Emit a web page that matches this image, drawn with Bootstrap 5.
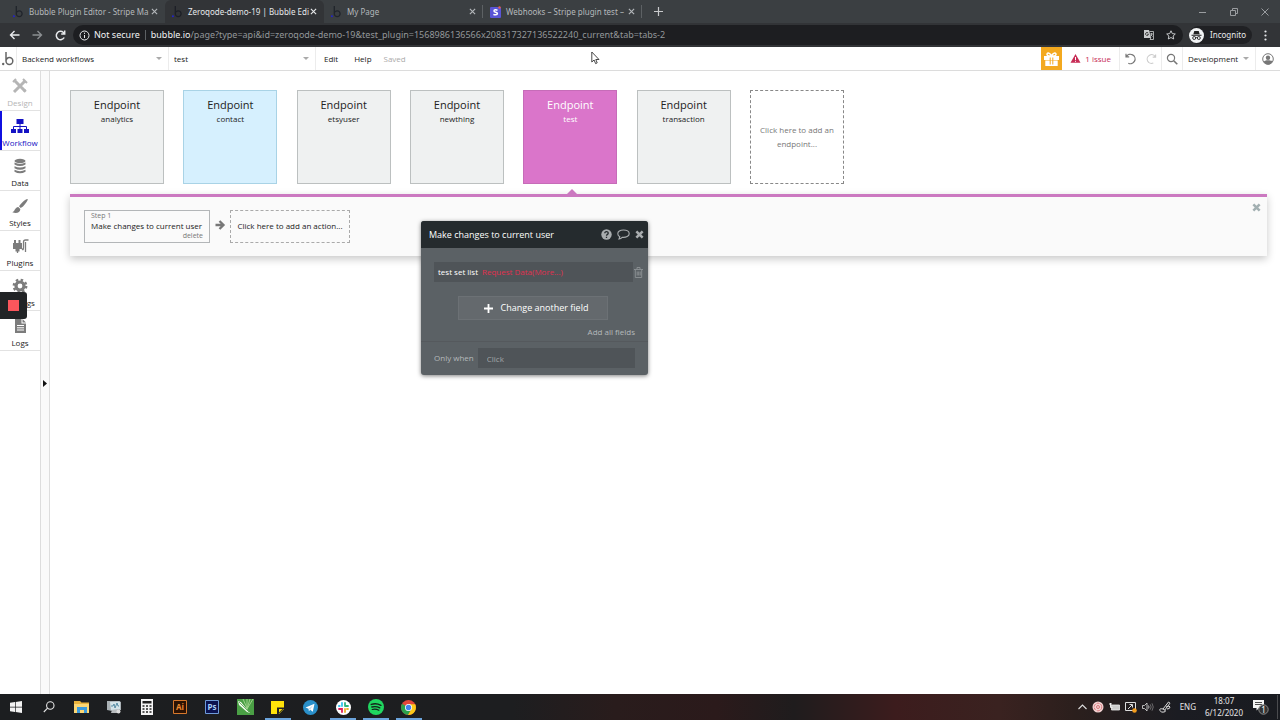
<!DOCTYPE html>
<html lang="en">
<head>
<meta charset="utf-8">
<meta name="viewport" content="width=device-width, initial-scale=1">
<title>Zeroqode-demo-19 | Bubble Editor</title>
<link rel="stylesheet" href="https://cdn.jsdelivr.net/npm/bootstrap@5.3.0/dist/css/bootstrap.min.css">
<style>
body{font-family:"Open Sans",sans-serif;font-size:8px;line-height:12px;color:#222;background:#fff}
button,select,input{font:inherit;color:inherit}
button{background:none;border:0;padding:0}
a{color:inherit;text-decoration:none}
svg{display:block;flex:none}
.chrome-font{font-family:"Noto Sans","Open Sans",sans-serif}

/* browser window */
.tabstrip{height:23px;background:#3b3f42;padding-left:6px}
.btab{width:159px;padding:0 7px 0 6px;color:#b4b8bb}
.btab.active{background:#323437;border-radius:6px 6px 0 0;color:#e6e8ea}
.btab .ttl{margin-left:5px;white-space:nowrap}
.btab button{margin-left:auto}
.btab.split{background:linear-gradient(#5d6164,#5d6164) no-repeat right center/1px 13px}
.winctl{gap:23px;padding-right:11px;color:#9a9da0}
.toolbar{height:24px;background:#323437;color:#e8eaed;padding:0 9px}
.omnibox{height:20px;border-radius:10px;background:#1d1e21;color:#93979a;font-size:9px;padding:0 7px 0 6px;margin-left:7px;white-space:nowrap}
.omnibox b{font-weight:400;color:#f1f3f4}
.omnibox .bar{width:1px;height:10px;background:#5d6164;margin:0 5px}
.incog{height:18px;border-radius:9px;background:#202124;padding-right:6px;gap:6px;margin-left:6px}

/* editor top bar */
.appbar{height:24px;border-bottom:1px solid #dcdcdc;background:#fff;white-space:nowrap}
.appbar>*{height:23px}
.cell{border-right:1px solid #ececec}
.logo{padding:0 2px}
.picker{appearance:none;border:0;border-right:1px solid #ececec;outline:0;padding:0 0 0 5px;background:#fff url("data:image/svg+xml,%3Csvg xmlns='http://www.w3.org/2000/svg' viewBox='0 0 6 4'%3E%3Cpath d='M0 0h6L3 3z' fill='%23aaa'/%3E%3C/svg%3E") no-repeat right 6px center/6px 4px}
.picker.page{width:152px}
.picker.flow{width:147px}
.picker.version{width:73px}
.help{margin-left:16px}
.saved{margin-left:12px;color:#aaa}
.gift{width:21px;background:#f3a91f}
.issue{color:#c72c56}
.account{padding:0 6px}

/* left rail */
.rail{width:41px;border-right:1px solid #ddd}
.rail a{height:40px;border-bottom:1px solid #e2e2e2;padding-top:7px;gap:3px}
.rail svg{color:#7c7c7c}
.rail a.off,.rail a.off svg{color:#b5b5b5}
.rail a.on,.rail a.on svg{color:#1412c4}
.rail a.on{box-shadow:inset 2px 0 #1010e0}
.gutter{width:9px;background:#fafafa;border-right:1px solid #ddd;padding:309px 0 0 2px}
.recorder{left:0;top:292px;width:27px;height:27px;background:#222426;border-radius:0 3px 3px 0;padding-left:8px}
.recorder i{width:11px;height:11px;background:#fb565c}

/* workflow canvas */
.canvas{padding:19px 13px 0 20px}
.endpoints{max-width:774px}
.endpoint{width:94px;height:94px;border:1px solid #bcc0c0;background:#eff1f1;padding-top:6px}
.endpoint strong{font-weight:400;font-size:11px;line-height:16px}
.endpoint.blue{background:#d6f0fe;border-color:#a9d3e6}
.endpoint.pink{background:#da75ca;border-color:#c66cb8;color:#fff}
.endpoint.new{background:#fff;border:1px dashed #888;color:#777;padding:0 6px;line-height:14px}
.actions{margin-top:10px;border-top:3px solid #cb78c0;background:#fafafa;height:62px;padding:13px 14px;box-shadow:0 3px 8px rgba(0,0,0,.22)}
.notch{left:497px;top:-8px;color:#cb78c0}
.step{width:126px;height:33px;border:1px solid #b3b6b8;padding:0 6px;line-height:10px}
.step small{font-size:7px;color:#777}
.addstep{width:120px;height:33px;border:1px dashed #aaa;padding-bottom:2px}
.shut{right:6px;top:6px;color:#a3b0b2}

/* property editor */
.editor{left:421px;top:221px;width:227px;background:#5b6165;border-radius:3px;box-shadow:0 1px 4px rgba(0,0,0,.5);color:#fff}
.editor header{height:27px;background:#252b2e;border-radius:3px 3px 0 0;padding:0 4px 0 8px;font-size:9px;gap:5px}
.editor header button{color:#a9adaf}
.field{padding:14px 5px 14px 13px}
.expr{width:199px;height:20px;background:#4f5458;padding-left:4px;gap:4px}
.expr em{font-style:normal;color:#e0304f}
.editor .more{width:150px;height:24px;background:#64696d;border:1px solid #6c7175;margin-left:37px;font-size:9px;padding-left:6px}
.editor .muted{color:#b5b9bb}
.allfields{padding:6px 13px 3px}
.when{border-top:1px solid #55595d;padding:6px 13px 7px}
.when input{height:20px;min-width:0;background:#4f5458;border:0;padding:0 9px;border-radius:0}
.when input::placeholder{color:#a3a7aa;opacity:1}
.pointer{left:591px;top:51px}

/* desktop taskbar */
.taskbar{height:26px;color:#e6e6e6;background:linear-gradient(90deg,#1c1e20 0,#1d1e20 40%,#291c1c 48%,#2b1a1b 56%,#1f1c1d 62%,#3c1c1d 70%,#3a2220 78%,#2b1f1d 84%,#1b1c22 92%,#191b20 100%)}
.apps{width:425px}
.apps button{height:26px;flex:1 1 0;display:flex;align-items:center;justify-content:center}
.apps button.run{background:linear-gradient(#6ba4dc,#6ba4dc) no-repeat center bottom/26px 2px}
.tray{gap:5px;line-height:12px}
.sliver{width:1px;background:#4a4b4e;margin:0 2px 0 3px}
</style>
</head>
<body class="d-flex flex-column min-vh-100 position-relative overflow-hidden">
<svg class="d-none">
  <symbol id="bub" viewBox="0 0 12 14"><path d="M4 0v9a3.400 3.400 0 1 0 3.400-3.400A3.400 3.400 0 0 0 4 9" fill="none" stroke="currentColor" stroke-width="1.500"/><circle cx="1.200" cy="12" r="1.200" fill="var(--dot,currentColor)"/></symbol>
  <symbol id="cross" viewBox="0 0 8 8"><path d="M1 1l6 6M7 1L1 7" stroke="currentColor" stroke-width="1.300"/></symbol>
  <symbol id="fatx" viewBox="0 0 10 10"><path d="M1.500 1.500l7 7M8.500 1.500l-7 7" stroke="currentColor" stroke-width="2.800"/></symbol>
</svg>

<div class="chrome-font">
  <div class="tabstrip d-flex">
    <div class="btab d-flex align-items-center"><svg width="12" height="12" style="--dot:#2222cc" color="#20242b"><use href="#bub"/></svg><span class="ttl">Bubble Plugin Editor - Stripe Ma</span><button aria-label="Close tab"><svg width="7" height="7"><use href="#cross"/></svg></button></div>
    <div class="btab active d-flex align-items-center"><svg width="12" height="12" style="--dot:#2222cc" color="#1c1f26"><use href="#bub"/></svg><span class="ttl">Zeroqode-demo-19 | Bubble Edi</span><button aria-label="Close tab"><svg width="7" height="7"><use href="#cross"/></svg></button></div>
    <div class="btab split d-flex align-items-center"><svg width="12" height="12" style="--dot:#2222cc" color="#20242b"><use href="#bub"/></svg><span class="ttl">My Page</span><button aria-label="Close tab"><svg width="7" height="7"><use href="#cross"/></svg></button></div>
    <div class="btab split d-flex align-items-center"><svg width="12" height="12" viewBox="0 0 12 12"><rect x="1" y="1" width="11" height="11" rx="1" fill="#5a55d6"/><path d="M8.500 4.300C7.500 3.700 5 3.400 5 5s3.400.9 3.400 2.500S5.500 9 4.400 8.400" fill="none" stroke="#fff" stroke-width="1.500"/><circle cx="10.500" cy="1.500" r="1.200" fill="#e5604d"/></svg><span class="ttl">Webhooks – Stripe plugin test –</span><button aria-label="Close tab"><svg width="7" height="7"><use href="#cross"/></svg></button></div>
    <button class="px-2 ms-1" aria-label="New tab"><svg width="9" height="9" viewBox="0 0 9 9" stroke="#c8cacc" stroke-width="1.200"><path d="M4.500 0v9M0 4.500h9"/></svg></button>
    <div class="winctl d-flex ms-auto align-items-center">
      <button aria-label="Minimize"><svg width="8" height="8" viewBox="0 0 8 8" stroke="currentColor"><path d="M0 4.500h7"/></svg></button>
      <button aria-label="Restore"><svg width="8" height="8" viewBox="0 0 8 8" fill="none" stroke="currentColor"><path d="M.5 2.500h5v5h-5zM2.500 2V.5h5v5H6"/></svg></button>
      <button aria-label="Close window"><svg width="8" height="8" viewBox="0 0 8 8" stroke="currentColor"><path d="M.5.5l7 7M7.500.5l-7 7"/></svg></button>
    </div>
  </div>
  <div class="toolbar d-flex align-items-center">
    <button aria-label="Back"><svg width="11" height="10" viewBox="0 0 11 10" fill="none" stroke="currentColor" stroke-width="1.400"><path d="M10.500 5H1.500M5.500 1l-4 4 4 4"/></svg></button>
    <button class="ms-2 ps-1" aria-label="Forward"><svg width="11" height="10" viewBox="0 0 11 10" fill="none" stroke="#8b8e91" stroke-width="1.400"><path d="M.5 5h9M5.500 1l4 4-4 4"/></svg></button>
    <button class="ms-2 ps-1" aria-label="Reload"><svg width="11" height="11" viewBox="0 0 11 11" fill="none" stroke="currentColor" stroke-width="1.500"><path d="M9.200 7.500A4.200 4.200 0 1 1 8.400 2.500L9.500 3.700M9.700.5v3.600H6.200"/></svg></button>
    <div class="omnibox d-flex align-items-center flex-fill">
      <svg width="11" height="11" viewBox="0 0 11 11" fill="none" stroke="#e8eaed"><circle cx="5.500" cy="5.500" r="4.500"/><path d="M5.500 5v3M5.500 2.700v1.200"/></svg>
      <b class="ms-1">Not secure</b><span class="bar"></span><span><b>bubble.io</b>/page?type=api&amp;id=zeroqode-demo-19&amp;test_plugin=1568986136566x208317327136522240_current&amp;tab=tabs-2</span>
      <button class="ms-auto me-2 pe-1" aria-label="Translate"><svg width="10" height="10" viewBox="0 0 10 10"><path d="M0 0h5l2 8H0z" fill="#c9cbcd"/><path d="M5.500 1.500h4v8H6l1-2M6 4h3M7.500 3v1c0 1-.5 2-1.500 2.500M7 5l1.500 1.500" fill="none" stroke="#c9cbcd" stroke-width=".8"/><path d="M4.200 3A1.500 1.500 0 1 0 4.500 4.300H3.200" fill="none" stroke="#222" stroke-width=".8"/></svg></button>
      <button aria-label="Bookmark"><svg width="10" height="10" viewBox="0 0 10 10" fill="none" stroke="#d5d7d9" stroke-width=".9"><path d="M5 .8l1.300 2.800 3 .4-2.200 2 .6 3L5 7.500 2.300 9l.6-3L.7 4l3-.4z"/></svg></button>
    </div>
    <div class="incog d-flex align-items-center"><svg width="15" height="15" viewBox="0 0 15 15"><circle cx="7.500" cy="7.500" r="7.500" fill="#f1f3f4"/><path d="M2.500 6.800h10v.9h-10zM4.300 6.300L5.300 3h4.400l1 3.300z" fill="#222"/><g fill="none" stroke="#222" stroke-width=".9"><circle cx="5.200" cy="10" r="1.500"/><circle cx="9.800" cy="10" r="1.500"/><path d="M6.700 9.800q.8-.5 1.600 0"/></g></svg>Incognito</div>
    <button class="ms-2 ps-1" aria-label="Menu"><svg width="3" height="11" viewBox="0 0 3 11" fill="currentColor"><circle cx="1.500" cy="1.500" r="1.100"/><circle cx="1.500" cy="5.500" r="1.100"/><circle cx="1.500" cy="9.500" r="1.100"/></svg></button>
    <span class="ps-1"></span>
  </div>
</div>

<nav class="appbar d-flex align-items-center">
  <a href="#" class="cell logo d-flex align-items-center" aria-label="Bubble"><svg width="12" height="14" color="#666"><use href="#bub"/></svg></a>
  <select class="picker page" aria-label="Page"><option>Backend workflows</option></select>
  <select class="picker flow" aria-label="Workflow"><option>test</option></select>
  <a href="#" class="d-flex align-items-center ps-2">Edit</a>
  <a href="#" class="help d-flex align-items-center">Help</a>
  <span class="saved d-flex align-items-center">Saved</span>
  <button class="gift d-flex align-items-center justify-content-center ms-auto" aria-label="Gift"><svg width="15" height="14" viewBox="0 0 15 14"><path d="M0 4h15v4H0zM1.300 8.500h12.400V14H1.300z" fill="#fff"/><path d="M7.500 4C6.500 1 3 0 3 2.400 3 4 5.500 4 7.500 4zM7.500 4c1-3 4.500-4 4.500-1.600C12 4 9.500 4 7.500 4z" fill="none" stroke="#fff" stroke-width="1.500"/><path d="M6.200 5.500v7M8.800 5.500v7" stroke="#f3a91f"/></svg></button>
  <a href="#" class="cell issue d-flex align-items-center px-2 gap-1"><svg width="11" height="9" viewBox="0 0 11 9"><path d="M5.500 0L10.500 8.800H.5z" fill="currentColor"/><path d="M5.500 3v3M5.500 6.800v1" stroke="#fff"/></svg><span>1 issue</span></a>
  <button class="px-1" aria-label="Undo"><svg width="13" height="12" viewBox="0 0 13 12" fill="none" stroke="#777" stroke-width="1.200"><path d="M2 .8v3h3.200M2.300 3.600A4.700 4.700 0 1 1 4.300 10.200"/></svg></button>
  <button class="cell px-1" aria-label="Redo"><svg width="12" height="12" viewBox="0 0 13 12" fill="none" stroke="#ccc" stroke-width="1.200"><path d="M11.500 1v3H8.300M11.200 3.800A4.700 4.700 0 1 0 9 10.300"/></svg></button>
  <button class="cell px-1" aria-label="Search"><svg width="12" height="12" viewBox="0 0 12 12" fill="none" stroke="#777" stroke-width="1.200"><circle cx="5" cy="5" r="3.600"/><path d="M7.700 7.700l3.600 3.600" stroke-width="1.600"/></svg></button>
  <select class="picker version" aria-label="Version"><option>Development</option></select>
  <button class="account" aria-label="Account"><svg width="12" height="12" viewBox="0 0 12 12"><circle cx="6" cy="6" r="5.300" fill="none" stroke="#777"/><circle cx="6" cy="4.700" r="2.200" fill="#777"/><path d="M1.500 9c1-2.500 8-2.500 9 0-2 3.300-7 3.300-9 0z" fill="#777"/></svg></button>
</nav>

<main class="d-flex flex-fill position-relative">
  <nav class="rail flex-shrink-0">
    <a href="#" class="off d-flex flex-column align-items-center"><svg width="16" height="16" viewBox="0 0 16 16"><path d="M2 14L13 3M3 3l10 10" stroke="currentColor" stroke-width="3"/><path d="M1 4l3-3M12 14l2-2M11 1l4 4" stroke="currentColor" stroke-width="2"/></svg>Design</a>
    <a href="#" class="on d-flex flex-column align-items-center"><svg width="18" height="16" viewBox="0 0 18 16"><path d="M5.500 1h7v5h-7zM0 11h5v4H0zM6.500 11h5v4h-5zM13 11h5v4h-5z" fill="currentColor"/><path d="M9 6v5M2.500 11V8.500h13V11" fill="none" stroke="currentColor"/></svg>Workflow</a>
    <a href="#" class="d-flex flex-column align-items-center"><svg width="12" height="16" viewBox="0 0 12 16" fill="currentColor"><ellipse cx="6" cy="3" rx="5.500" ry="2.200"/><path d="M.5 4.600q5.500 2.800 11 0v2q-5.500 3-11 0zM.5 8.200q5.500 2.800 11 0v2q-5.500 3-11 0zM.5 11.800q5.500 2.800 11 0v2q-5.500 3-11 0z"/></svg>Data</a>
    <a href="#" class="d-flex flex-column align-items-center"><svg width="16" height="16" viewBox="0 0 16 16" fill="currentColor"><path d="M15.500 1c.8.800-.5 3-4.500 7.500L8.700 10 7 8.300C9 5 14.500.2 15.500 1zM6.300 9l2 2c.2 3.500-4 5-8 3.200C3 13.500 2.500 9.500 6.300 9z"/></svg>Styles</a>
    <a href="#" class="d-flex flex-column align-items-center"><svg width="17" height="16" viewBox="0 0 17 16"><path d="M1 5h9v6H7.500v2.500h-4V11H1zM2 2h2v3H2zM6.500 2h2v3h-2z" fill="currentColor"/><path d="M5.500 13v2M10 10.500q1.500 3 1.500-1.500V4q0-2 2-2h3M13.500 14V4" fill="none" stroke="currentColor" stroke-width="1.300"/></svg>Plugins</a>
    <a href="#" class="d-flex flex-column align-items-center"><svg width="16" height="16" viewBox="0 0 16 16" fill="none" stroke="currentColor"><circle cx="8" cy="8" r="4" stroke-width="3.200"/><circle cx="8" cy="8" r="6.200" stroke-width="2.400" stroke-dasharray="2.430 2.430"/></svg>Settings</a>
    <a href="#" class="d-flex flex-column align-items-center"><svg width="13" height="16" viewBox="0 0 13 16"><path d="M1 1h6.500v4.500H12V15H1zM8.500 1L12 4.600H8.500z" fill="currentColor"/><path d="M3 7.500h7M3 9.800h7M3 12h7" stroke="#fff"/></svg>Logs</a>
  </nav>
  <div class="gutter flex-shrink-0"><button class="d-block" aria-label="Expand"><svg width="4" height="7" viewBox="0 0 4 7"><path d="M0 0l4 3.500L0 7z" fill="#111"/></svg></button></div>

  <section class="canvas flex-fill">
    <div class="endpoints d-flex justify-content-between text-center">
      <button class="endpoint d-flex flex-column align-items-center"><strong>Endpoint</strong><span>analytics</span></button>
      <button class="endpoint blue d-flex flex-column align-items-center"><strong>Endpoint</strong><span>contact</span></button>
      <button class="endpoint d-flex flex-column align-items-center"><strong>Endpoint</strong><span>etsyuser</span></button>
      <button class="endpoint d-flex flex-column align-items-center"><strong>Endpoint</strong><span>newthing</span></button>
      <button class="endpoint pink d-flex flex-column align-items-center"><strong>Endpoint</strong><span>test</span></button>
      <button class="endpoint d-flex flex-column align-items-center"><strong>Endpoint</strong><span>transaction</span></button>
      <button class="endpoint new">Click here to add an endpoint...</button>
    </div>
    <div class="actions position-relative d-flex align-items-start">
      <svg class="notch position-absolute" width="10" height="5" viewBox="0 0 10 5"><path d="M0 5l5-5 5 5z" fill="currentColor"/></svg>
      <div class="step d-flex flex-column"><small>Step 1</small><span class="text-nowrap">Make changes to current user</span><small class="text-end">delete</small></div>
      <svg class="mx-1 align-self-start mt-2" width="12" height="14" viewBox="0 0 12 14"><path d="M1.500 7h8M5.500 3l4 4-4 4" fill="none" stroke="#777" stroke-width="2.300"/></svg>
      <button class="addstep text-nowrap">Click here to add an action...</button>
      <button class="shut position-absolute" aria-label="Close"><svg width="9" height="9"><use href="#fatx"/></svg></button>
    </div>
  </section>
</main>

<div class="recorder position-absolute d-flex align-items-center"><i></i></div>

<section class="editor position-absolute">
  <header class="d-flex align-items-center"><span class="me-auto">Make changes to current user</span>
    <button aria-label="Help"><svg width="11" height="11" viewBox="0 0 11 11"><circle cx="5.500" cy="5.500" r="5.200" fill="currentColor"/><path d="M3.800 4.200c0-2.200 3.500-2 3.400 0 0 1.200-1.700 1.200-1.700 2.600M5.500 7.800v1.300" fill="none" stroke="#252b2e" stroke-width="1.300"/></svg></button>
    <button aria-label="Comment"><svg width="13" height="11" viewBox="0 0 13 11" fill="none" stroke="currentColor" stroke-width="1.100"><path d="M6.500 1C3 1 .8 2.600.8 4.700c0 1.300.8 2.300 2 3L2 10c1.500-.3 2.500-1 3.200-1.700 4 .4 7-1.200 7-3.600C12.200 2.600 10 1 6.500 1z"/></svg></button>
    <button aria-label="Close editor"><svg width="9" height="9"><use href="#fatx"/></svg></button>
  </header>
  <div class="field d-flex align-items-center">
    <div class="expr d-flex align-items-center"><span>test set list</span><em>Request Data(More...)</em></div>
    <button class="muted ms-auto opacity-50" aria-label="Delete"><svg width="9" height="11" viewBox="0 0 9 11" fill="none" stroke="currentColor"><path d="M0 2.500h9M3 2V.5h3V2M1.300 3v7.500h6.400V3M3.200 4.500v4M4.700 4.500v4M6.200 4.500v4"/></svg></button>
  </div>
  <button class="more d-flex align-items-center justify-content-center gap-2"><svg width="9" height="9" viewBox="0 0 9 9" stroke="#fff" stroke-width="1.800"><path d="M4.500 0v9M0 4.500h9"/></svg>Change another field</button>
  <div class="allfields d-flex justify-content-end"><a href="#" class="muted">Add all fields</a></div>
  <div class="when d-flex align-items-center gap-1"><label for="cond" class="muted text-nowrap">Only when</label><input id="cond" class="flex-fill" placeholder="Click"></div>
</section>

<svg class="pointer position-absolute" width="9" height="14" viewBox="0 0 9 14"><path d="M.8 1v10l2.300-2 1.500 3.600 1.600-.7L4.800 8.500H8z" fill="#fff" stroke="#333" stroke-width=".9"/></svg>

<footer class="taskbar chrome-font d-flex align-items-center">
  <div class="apps d-flex">
    <button aria-label="Start"><svg width="12" height="12" viewBox="0 0 12 12" fill="#f3f3f3"><path d="M0 1.700L5 1v4.700H0zM5.700.9L12 0v5.700H5.700zM0 6.400h5V11l-5-.7zM5.700 6.400H12V12l-6.300-.9z"/></svg></button>
    <button aria-label="Search"><svg width="12" height="12" viewBox="0 0 12 12" fill="none" stroke="#e6e6e6" stroke-width="1.100"><circle cx="7.300" cy="4.500" r="3.700"/><path d="M4.600 7.200L.8 11"/></svg></button>
    <button aria-label="Files"><svg width="16" height="14" viewBox="0 0 16 14"><path d="M0 1h6l1.500 1.500H15V13H0z" fill="#e9b33d"/><path d="M0 4h15v9H0z" fill="#fbd775"/><path d="M3 7h10v6h-3v-3H6v3H3z" fill="#3c9bdc"/></svg></button>
    <button aria-label="Monitor"><svg width="16" height="14" viewBox="0 0 16 14"><path d="M1 1h12l2 1v8l-9 1-5-1z" fill="#a9b1b5"/><path d="M4 2l10-.5v7.500L5 10z" fill="#d3e4e9"/><path d="M5 6h2l1-2 1 4 2-5 1 3h1" fill="none" stroke="#3c7a95" stroke-width=".8"/><path d="M6 10h5v3H5z" fill="#b8bcbe"/><circle cx="12.500" cy="11.500" r="2" fill="#ddd"/></svg></button>
    <button aria-label="Calculator"><svg width="12" height="16" viewBox="0 0 12 16"><path d="M0 0h12v16H0z" fill="#f5f5f5"/><path d="M1.500 2h9v2.500h-9z" fill="#222"/><path d="M1.500 7h9M1.500 10h9M1.500 13h9" stroke="#222" stroke-width="1.600" stroke-dasharray="2 1.500"/></svg></button>
    <button aria-label="Illustrator"><svg width="14" height="14" viewBox="0 0 14 14"><path d="M.5.5h13v13H.5z" fill="#2b1203" stroke="#d6782c"/><text x="7" y="10" text-anchor="middle" font-size="8" font-weight="700" fill="#ee8a31">Ai</text></svg></button>
    <button aria-label="Photoshop"><svg width="14" height="14" viewBox="0 0 14 14"><path d="M.5.5h13v13H.5z" fill="#0b1350" stroke="#6e9bd8"/><text x="7" y="10" text-anchor="middle" font-size="8" font-weight="700" fill="#a8d0fa">Ps</text></svg></button>
    <button aria-label="CorelDraw"><svg width="17" height="16" viewBox="0 0 17 16"><path d="M0 0h17v16H0z" fill="#4a9f45"/><path d="M6 0l4 9M16 0l-6 10M10 0v10M13 0l-3 10" stroke="#9bd088"/><path d="M1 2l3 1 9 11-3-1L2 6z" fill="#f2f8ee"/><path d="M2 3l10 10" stroke="#4a9f45" stroke-width=".8"/></svg></button>
    <button class="run" aria-label="Notes"><svg width="13" height="13" viewBox="0 0 13 13"><path d="M0 0h13v8l-5 5H0z" fill="#ffe20a"/><path d="M6 6.500h7v1L7.500 13H6z" fill="#222"/><path d="M8 8h3.500L8 11.500z" fill="#ffe20a"/></svg></button>
    <button aria-label="Telegram"><svg width="15" height="15" viewBox="0 0 15 15"><circle cx="7.500" cy="7.500" r="7.500" fill="#2a90ca"/><path d="M2.500 7.500L11.500 3.700l-1.700 8-2.600-2-1.300 1.500-.4-2.500z" fill="#fff"/><path d="M5.500 8.700l4.500-3.500-2.800 4.500" fill="#c5dff0"/></svg></button>
    <button class="run" aria-label="Slack"><svg width="15" height="15" viewBox="0 0 15 15"><circle cx="7.500" cy="7.500" r="7.500" fill="#fff"/><g stroke-width="1.800" stroke-linecap="round"><path d="M6 2.800V6M2.900 6h.8" stroke="#36c5f0"/><path d="M9 3v3M9 6h3" stroke="#2eb67d"/><path d="M9 9v3M11 9h1" stroke="#ecb22e"/><path d="M3 9h3v3" fill="none" stroke="#e01e5a"/></g></svg></button>
    <button class="run" aria-label="Spotify"><svg width="16" height="16" viewBox="0 0 16 16"><circle cx="8" cy="8" r="8" fill="#20d760"/><g fill="none" stroke="#15241a" stroke-linecap="round"><path d="M3.300 5.400q5-1.600 9.600.9" stroke-width="1.500"/><path d="M3.800 8q4.300-1.200 8 .9" stroke-width="1.300"/><path d="M4.200 10.500q3.500-1 6.700.8" stroke-width="1.100"/></g></svg></button>
    <button class="run" aria-label="Chrome"><svg width="15" height="15" viewBox="0 0 15 15"><circle cx="7.500" cy="7.500" r="7.500" fill="#e3473a"/><path d="M1 3.800A7.500 7.500 0 0 0 7 15l3.500-6-3-1.500z" fill="#2ba24c"/><path d="M7 15A7.500 7.500 0 0 0 14.200 4.300H7.500l3 4.700z" fill="#fbc918"/><circle cx="7.500" cy="7.500" r="3.500" fill="#fff"/><circle cx="7.500" cy="7.500" r="2.700" fill="#4382ed"/></svg></button>
  </div>
  <div class="tray d-flex align-items-center ms-auto">
    <svg width="9" height="6" viewBox="0 0 9 6" fill="none" stroke="#ddd" stroke-width="1.100"><path d="M.5 5l4-4 4 4"/></svg>
    <svg width="12" height="12" viewBox="0 0 12 12"><circle cx="6" cy="6" r="5.500" fill="#f3d3d3"/><g fill="none" stroke="#d9777b"><circle cx="6" cy="6" r="3.800" stroke-dasharray="3 1"/><circle cx="6" cy="6" r="1.500"/></g></svg>
    <svg width="11" height="9" viewBox="0 0 11 9"><path d="M2.500 2h8v5h-8z" fill="#ccc" stroke="#eee" stroke-width=".8"/><path d="M0 1h3M1.500 0v4.500h2" fill="none" stroke="#eee"/></svg>
    <svg width="12" height="11" viewBox="0 0 12 11"><path d="M.5.5h10v8H.5z" fill="none" stroke="#ddd"/><path d="M3 7l4-4M4.500 2.500h3v3" fill="none" stroke="#ddd"/><circle cx="9.500" cy="8.500" r="2.300" fill="#f39c1c"/></svg>
    <svg width="12" height="10" viewBox="0 0 12 10" fill="none" stroke="#ccc" stroke-width=".9"><path d="M.5 3.500h2L5 1v8L2.500 6.500h-2zM6.500 3.500q1 1.500 0 3"/><path d="M8.200 2.300q2 2.700 0 5.400M10 1.300q2.500 3.700 0 7.400" opacity=".5"/></svg>
    <svg class="me-1" width="12" height="12" viewBox="0 0 12 12" fill="none" stroke="#ddd"><path d="M4 8l5.500-7 1.500 1.200L5.800 9zM4 8Q0 7 1 9.500T5 11q2 0 1-2M7 6q4-2 4 0t-3 2"/></svg>
    <span>ENG</span>
    <span class="text-center text-nowrap ms-1">18:07<br>6/12/2020</span>
    <svg class="ms-1" width="17" height="16" viewBox="0 0 17 16"><path d="M1 1h11v8H7l-2.500 2.500V9H1z" fill="#f4f4f4"/><path d="M3 3.500h7M3 5.500h7" stroke="#222" stroke-width=".8"/><circle cx="11.500" cy="10.500" r="4.700" fill="#333" stroke="#8b8b8b"/><text x="11.500" y="13.500" text-anchor="middle" font-size="8" fill="#fff">1</text></svg>
    <span class="sliver align-self-stretch"></span>
  </div>
</footer>
<script src="https://cdn.jsdelivr.net/npm/bootstrap@5.3.0/dist/js/bootstrap.bundle.min.js"></script>
</body>
</html>
